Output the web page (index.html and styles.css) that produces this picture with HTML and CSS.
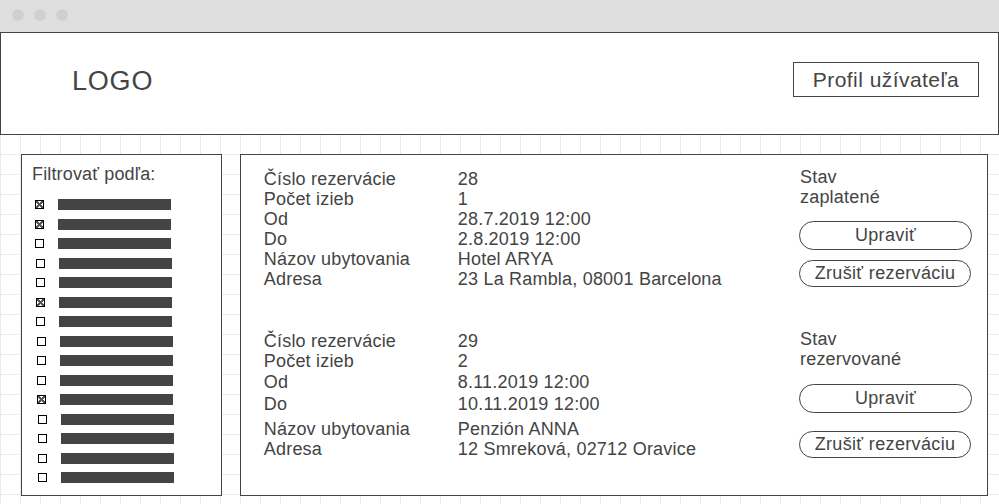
FILE: index.html
```html
<!DOCTYPE html>
<html lang="sk">
<head>
<meta charset="utf-8">
<title>Rezervácie</title>
<link rel="stylesheet" href="styles.css">
</head>
<body>
<div class="titlebar">
  <span class="dot"></span><span class="dot"></span><span class="dot"></span>
</div>
<header class="header">
  <div class="logo">LOGO</div>
  <div class="profile">Profil užívateľa</div>
</header>
<main class="main">
  <aside class="filter">
    <div class="filter-title">Filtrovať podľa:</div>
    <ul class="filter-list">
      <li class="item"><span class="cb on"></span><span class="bar"></span></li>
      <li class="item"><span class="cb on"></span><span class="bar"></span></li>
      <li class="item"><span class="cb"></span><span class="bar"></span></li>
      <li class="item s1"><span class="cb"></span><span class="bar"></span></li>
      <li class="item s1"><span class="cb"></span><span class="bar"></span></li>
      <li class="item s1"><span class="cb on"></span><span class="bar"></span></li>
      <li class="item s1"><span class="cb"></span><span class="bar"></span></li>
      <li class="item s2"><span class="cb"></span><span class="bar"></span></li>
      <li class="item s2"><span class="cb"></span><span class="bar"></span></li>
      <li class="item s2"><span class="cb"></span><span class="bar"></span></li>
      <li class="item s2"><span class="cb on"></span><span class="bar"></span></li>
      <li class="item s3"><span class="cb"></span><span class="bar"></span></li>
      <li class="item s3"><span class="cb"></span><span class="bar"></span></li>
      <li class="item s3"><span class="cb"></span><span class="bar"></span></li>
      <li class="item s3"><span class="cb"></span><span class="bar"></span></li>
    </ul>
  </aside>
  <section class="reservations">
    <article class="res">
      <div class="details">
        <span>Číslo rezervácie</span><span>28</span>
        <span>Počet izieb</span><span>1</span>
        <span>Od</span><span>28.7.2019 12:00</span>
        <span>Do</span><span>2.8.2019 12:00</span>
        <span>Názov ubytovania</span><span>Hotel ARYA</span>
        <span>Adresa</span><span>23 La Rambla, 08001 Barcelona</span>
      </div>
      <div class="side">
        <div class="status">Stav</div>
        <div class="status">zaplatené</div>
        <button class="btn btn-edit">Upraviť</button>
        <button class="btn btn-cancel">Zrušiť rezerváciu</button>
      </div>
    </article>
    <article class="res res-alt">
      <div class="details details-alt">
        <span>Číslo rezervácie</span><span>29</span>
        <span>Počet izieb</span><span>2</span>
        <span>Od</span><span>8.11.2019 12:00</span>
        <span>Do</span><span>10.11.2019 12:00</span>
        <span>Názov ubytovania</span><span>Penzión ANNA</span>
        <span>Adresa</span><span>12 Smreková, 02712 Oravice</span>
      </div>
      <div class="side">
        <div class="status">Stav</div>
        <div class="status">rezervované</div>
        <button class="btn btn-edit">Upraviť</button>
        <button class="btn btn-cancel">Zrušiť rezerváciu</button>
      </div>
    </article>
  </section>
</main>
</body>
</html>
```
FILE: styles.css
```css
* { box-sizing: border-box; }
html, body { margin: 0; padding: 0; }
body {
  width: 999px;
  height: 504px;
  overflow: hidden;
  font-family: "Liberation Sans", Arial, sans-serif;
  color: #444;
  background: #fff;
}
.titlebar {
  height: 32px;
  background: #dfdfdf;
  display: flex;
  align-items: center;
  gap: 10px;
  padding-left: 12px;
  padding-bottom: 2px;
}
.dot {
  width: 12px;
  height: 12px;
  border-radius: 50%;
  background: #d0d0d0;
}
.header {
  height: 103px;
  border: 1px solid #444;
  display: flex;
  align-items: center;
  justify-content: space-between;
  padding: 0 19px 0 71px;
}
.logo {
  font-size: 27px;
  margin-bottom: 4px;
  letter-spacing: 0.8px;
}
.profile {
  width: 186px;
  height: 35px;
  border: 1px solid #444;
  font-size: 21px;
  line-height: 33px;
  letter-spacing: 0.45px;
  text-align: center;
  margin-bottom: 8px;
}
.main {
  height: 369px;
  display: flex;
  gap: 18px;
  padding: 19px 11px 9px 21px;
  background-color: #fff;
  background-image:
    linear-gradient(to bottom, transparent 19px, #ebebeb 19px, #ebebeb 20px, transparent 20px),
    linear-gradient(to right, #ebebeb 1px, transparent 1px);
  background-size: 20px 20px;
}
.filter {
  width: 201px;
  height: 342px;
  border: 1px solid #444;
  background: #fff;
  padding: 8px 0 0 10px;
}
.filter-title {
  font-size: 18px;
  line-height: 22px;
  letter-spacing: 0.15px;
}
.filter-list {
  list-style: none;
  margin: 10px 0 0 0;
  padding: 0 0 0 3px;
}
.item {
  height: 19.5px;
  display: flex;
  align-items: center;
  gap: 14px;
}
.item.s1 { padding-left: 1px; }
.item.s2 { padding-left: 2px; }
.item.s3 { padding-left: 3px; }
.cb {
  width: 9px;
  height: 9px;
  border: 1px solid #000;
  background: #fff;
  flex: none;
}
.cb.on {
  background:
    linear-gradient(45deg, transparent 42%, #555 42%, #555 58%, transparent 58%),
    linear-gradient(-45deg, transparent 42%, #555 42%, #555 58%, transparent 58%),
    #fff;
}
.bar {
  width: 113px;
  height: 11px;
  background: #444;
}
.reservations {
  width: 749px;
  height: 342px;
  border: 1px solid #444;
  background: #fff;
  padding: 12px 15px 0 23px;
  display: flex;
  flex-direction: column;
  gap: 40px;
}
.res {
  display: flex;
  justify-content: space-between;
}
.details {
  padding-top: 2px;
  display: grid;
  grid-template-columns: 194px auto;
  grid-template-rows: repeat(6, 20px);
  font-size: 18px;
  line-height: 20px;
  letter-spacing: 0.2px;
  align-content: start;
}
.details-alt {
  grid-template-rows: 20px 21px 22px 25px 20px 20px;
}
.side {
  width: 173px;
  font-size: 18px;
  line-height: 20px;
  letter-spacing: 0.2px;
}
.status { padding-left: 1px; }
.btn {
  display: block;
  width: 100%;
  font-family: inherit;
  font-size: 18px;
  letter-spacing: 0.35px;
  color: #444;
  background: #fff;
  border: 1px solid #444;
  border-radius: 15px;
  padding: 0;
  text-align: center;
}
.btn-edit {
  height: 29px;
  line-height: 27px;
  margin-top: 14px;
}
.btn-cancel {
  width: 172px;
  height: 27px;
  line-height: 25px;
  margin-top: 10px;
}
.res-alt .btn-edit { margin-top: 15px; }
.res-alt .btn-cancel { margin-top: 18px; }
```
